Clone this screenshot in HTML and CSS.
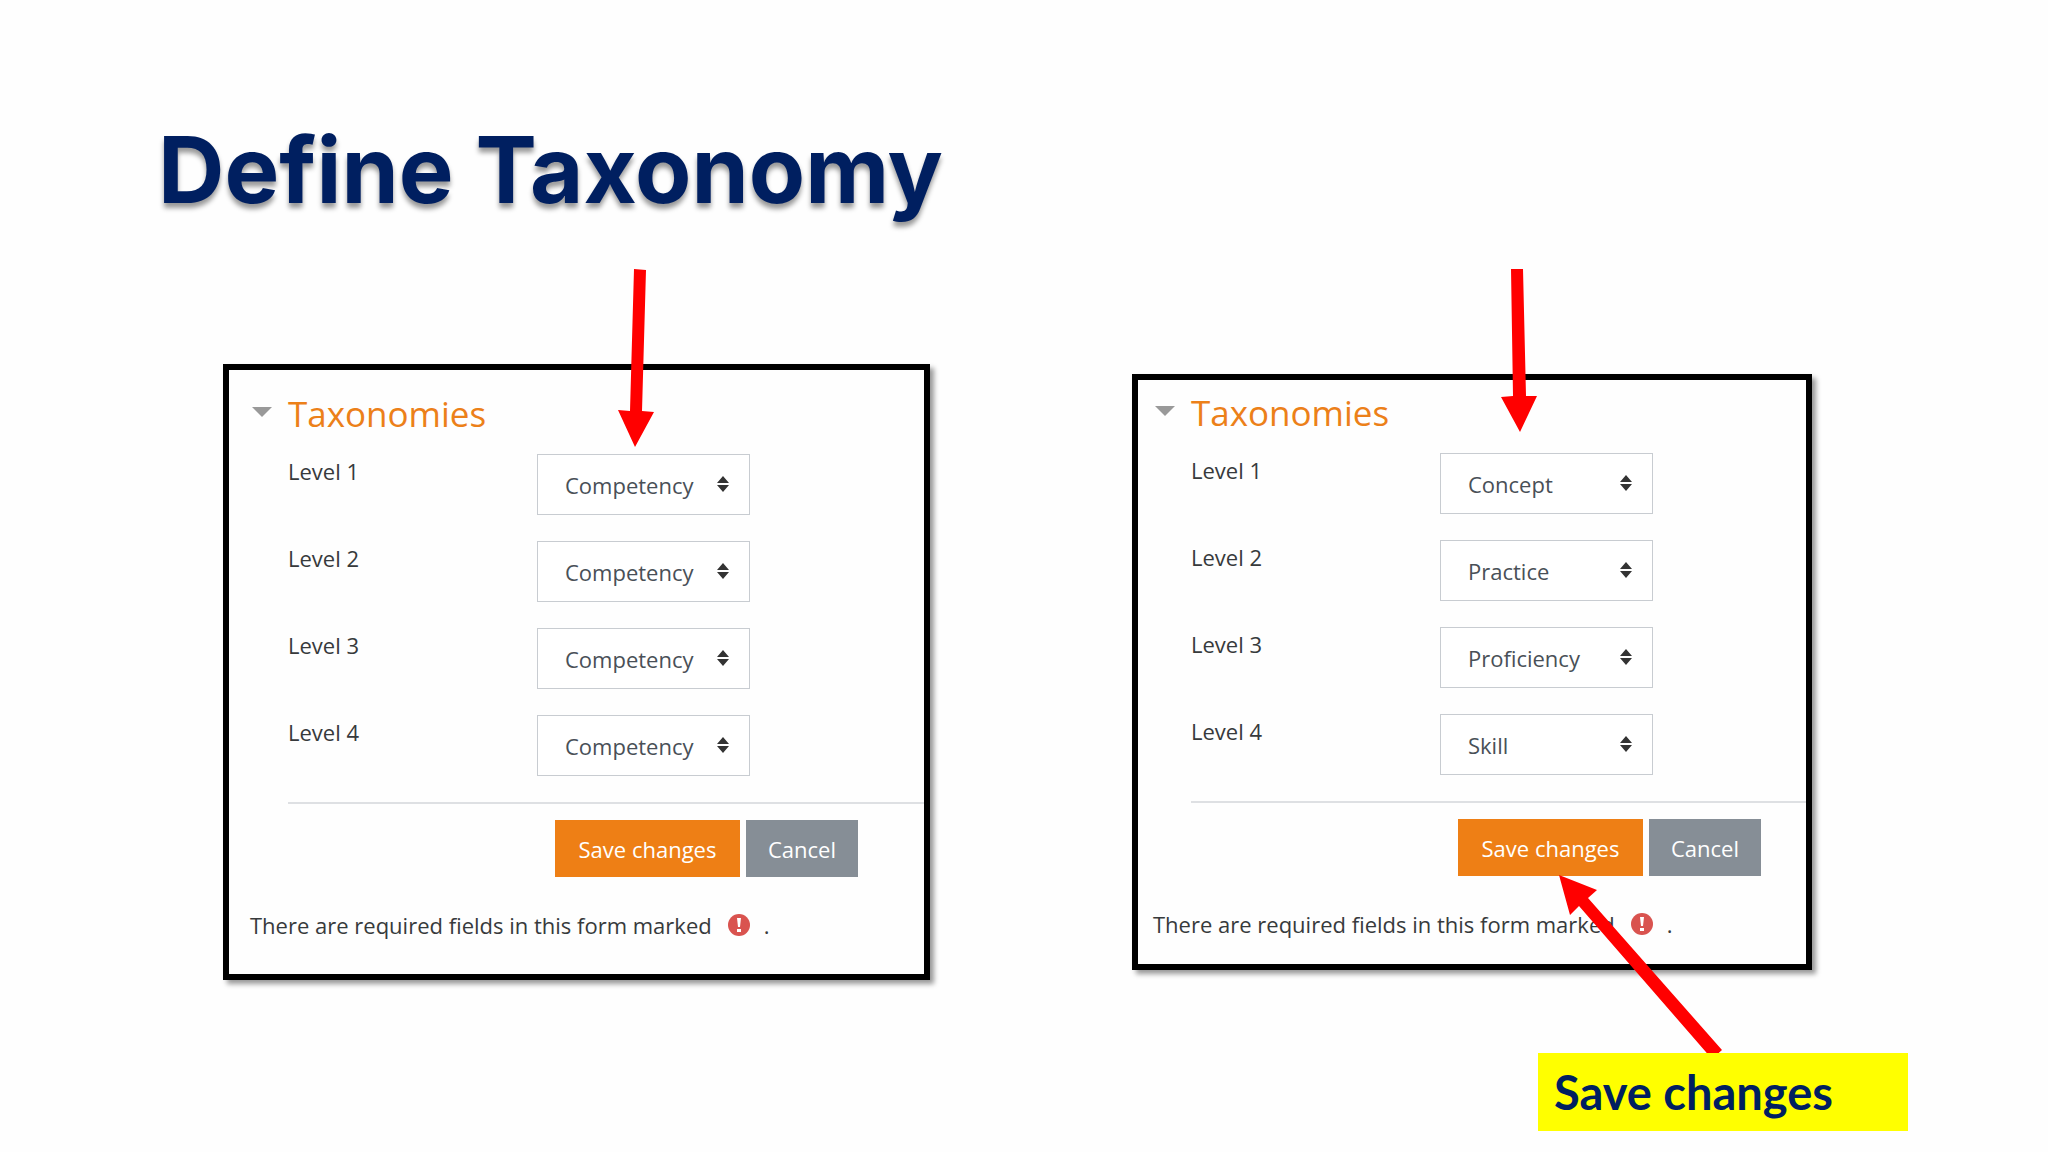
FILE: index.html
```html
<!DOCTYPE html>
<html lang="en">

<head>
    <meta charset="utf-8">
    <title>Define Taxonomy</title>
    <link rel="stylesheet" href="styles.css">
</head>

<body>
    <h1 class="slide-title">Define Taxonomy</h1>
    <div class="panels">
        <form class="panel">
            <h2 class="panel-heading">
                <svg class="caret" width="20" height="10" viewBox="0 0 20 10"><path d="M0 0h20L10 10z" /></svg>
                Taxonomies
            </h2>
            <div class="fields">
                <div class="field">
                    <label for="leftLevel1">Level 1</label>
                    <div class="select-box">
                        <select id="leftLevel1">
                            <option>Competency</option>
                        </select>
                        <svg class="sort" width="12" height="16" viewBox="0 0 12 16"><path d="M0 7l6-7 6 7zM0 9h12l-6 7z" /></svg>
                    </div>
                </div>
                <div class="field">
                    <label for="leftLevel2">Level 2</label>
                    <div class="select-box">
                        <select id="leftLevel2">
                            <option>Competency</option>
                        </select>
                        <svg class="sort" width="12" height="16" viewBox="0 0 12 16"><path d="M0 7l6-7 6 7zM0 9h12l-6 7z" /></svg>
                    </div>
                </div>
                <div class="field">
                    <label for="leftLevel3">Level 3</label>
                    <div class="select-box">
                        <select id="leftLevel3">
                            <option>Competency</option>
                        </select>
                        <svg class="sort" width="12" height="16" viewBox="0 0 12 16"><path d="M0 7l6-7 6 7zM0 9h12l-6 7z" /></svg>
                    </div>
                </div>
                <div class="field">
                    <label for="leftLevel4">Level 4</label>
                    <div class="select-box">
                        <select id="leftLevel4">
                            <option>Competency</option>
                        </select>
                        <svg class="sort" width="12" height="16" viewBox="0 0 12 16"><path d="M0 7l6-7 6 7zM0 9h12l-6 7z" /></svg>
                    </div>
                </div>
            </div>
            <div class="button-container">
                <button type="button" class="save">Save changes</button>
                <button type="button" class="cancel">Cancel</button>
            </div>
            <p class="required-note">
                <span>There are required fields in this form marked</span>
                <svg class="required-icon" width="22" height="22" viewBox="0 0 22 22">
                    <circle cx="11" cy="11" r="11" />
                    <path d="M9 4h4l-1 9h-2zM9 15h4v3h-4z" />
                </svg>
                <span>.</span>
            </p>
            <svg class="arrow arrow-left" width="36" height="178" viewBox="0 0 36 178">
                <path d="M16 0l12 1-4 141 12 1-19 35L0 141l12 1z" />
            </svg>
        </form>

        <form class="panel panel-compact">
            <h2 class="panel-heading">
                <svg class="caret" width="20" height="10" viewBox="0 0 20 10"><path d="M0 0h20L10 10z" /></svg>
                Taxonomies
            </h2>
            <div class="fields">
                <div class="field">
                    <label for="rightLevel1">Level 1</label>
                    <div class="select-box">
                        <select id="rightLevel1">
                            <option>Concept</option>
                        </select>
                        <svg class="sort" width="12" height="16" viewBox="0 0 12 16"><path d="M0 7l6-7 6 7zM0 9h12l-6 7z" /></svg>
                    </div>
                </div>
                <div class="field">
                    <label for="rightLevel2">Level 2</label>
                    <div class="select-box">
                        <select id="rightLevel2">
                            <option>Practice</option>
                        </select>
                        <svg class="sort" width="12" height="16" viewBox="0 0 12 16"><path d="M0 7l6-7 6 7zM0 9h12l-6 7z" /></svg>
                    </div>
                </div>
                <div class="field">
                    <label for="rightLevel3">Level 3</label>
                    <div class="select-box">
                        <select id="rightLevel3">
                            <option>Proficiency</option>
                        </select>
                        <svg class="sort" width="12" height="16" viewBox="0 0 12 16"><path d="M0 7l6-7 6 7zM0 9h12l-6 7z" /></svg>
                    </div>
                </div>
                <div class="field">
                    <label for="rightLevel4">Level 4</label>
                    <div class="select-box">
                        <select id="rightLevel4">
                            <option>Skill</option>
                        </select>
                        <svg class="sort" width="12" height="16" viewBox="0 0 12 16"><path d="M0 7l6-7 6 7zM0 9h12l-6 7z" /></svg>
                    </div>
                </div>
            </div>
            <div class="button-container">
                <button type="button" class="save">Save changes</button>
                <button type="button" class="cancel">Cancel</button>
            </div>
            <p class="required-note">
                <span>There are required fields in this form marked</span>
                <svg class="required-icon" width="22" height="22" viewBox="0 0 22 22">
                    <circle cx="11" cy="11" r="11" />
                    <path d="M9 4h4l-1 9h-2zM9 15h4v3h-4z" />
                </svg>
                <span>.</span>
            </p>
            <svg class="arrow arrow-right" width="36" height="163" viewBox="0 0 36 163">
                <path d="M10 0h12l3 127h11l-17 36L0 128l12-1z" />
            </svg>
            <svg class="arrow arrow-save" width="164" height="184" viewBox="0 0 164 184">
                <path d="M0 0l38 15-9 8 134 152-10 9L20 31l-9 9z" />
            </svg>
        </form>
    </div>
    <div class="callout">Save changes</div>
</body>

</html>
```
FILE: styles.css
```css
body {
    font-family: "Open Sans", "Noto Sans", sans-serif;
    background-color: #fefefe;
    margin: 0;
    padding: 121px 140px 20px 158px;
    display: flex;
    flex-direction: column;
}

.slide-title {
    margin: 0;
    font-family: Inter, sans-serif;
    font-size: 92px;
    line-height: 98px;
    font-weight: bold;
    color: #001f60;
    text-shadow: 0 5px 5px rgba(0, 0, 0, 0.4);
}

.panels {
    display: grid;
    grid-template-columns: 707fr 680fr;
    column-gap: 202px;
    align-items: start;
    margin: 145px 96px 0 65px;
}

.panel {
    position: relative;
    box-sizing: border-box;
    border: 6px solid #000;
    padding: 19px 0 31px 21px;
    background-color: #fefefe;
    box-shadow: 4px 4px 5px rgba(0, 0, 0, 0.4);
}

.panel-compact {
    margin-top: 10px;
    padding: 8px 0 22px 15px;
}

.panel-heading {
    display: flex;
    align-items: center;
    gap: 16px;
    margin: 0 0 15px 2px;
    font-size: 35px;
    line-height: 50px;
    font-weight: normal;
    color: #ec8019;
}

.caret {
    fill: #999;
    margin-bottom: 4px;
}

.fields {
    display: grid;
    gap: 26px;
    margin-left: 38px;
    padding-bottom: 26px;
    border-bottom: 2px solid #dee0e3;
}

.field {
    display: grid;
    grid-template-columns: 249px 213px;
    font-size: 22px;
}

label {
    line-height: 34px;
    color: #373a3c;
}

.select-box {
    position: relative;
}

select {
    display: block;
    width: 100%;
    height: 61px;
    padding: 0 27px;
    border: 1px solid #c8ccd1;
    border-radius: 0;
    background-color: #fff;
    color: #495057;
    font-family: inherit;
    font-size: 22px;
    appearance: none;
}

.sort {
    position: absolute;
    right: 21px;
    top: 22px;
    fill: #333;
    pointer-events: none;
}

.button-container {
    display: flex;
    gap: 6px;
    margin: 16px 0 0 305px;
}

button {
    height: 57px;
    padding: 0;
    border: none;
    color: #fff;
    font-family: inherit;
    font-size: 22px;
    cursor: pointer;
}

.save {
    width: 185px;
    background-color: #ee7f15;
}

.cancel {
    width: 112px;
    background-color: #868e96;
}

.required-note {
    display: flex;
    align-items: center;
    margin: 30px 0 0;
    font-size: 22px;
    line-height: 36px;
    color: #373a3c;
}

.required-icon {
    margin: 0 14px 0 16px;
    fill: #d9534f;
}

.required-icon path {
    fill: #fff;
}

.arrow {
    position: absolute;
    fill: #f00;
}

.arrow-left {
    left: 389px;
    top: -101px;
}

.arrow-right {
    left: 363px;
    top: -111px;
}

.arrow-save {
    left: 421px;
    top: 495px;
}

.callout {
    /* covers the tail of the save arrow */
    position: relative;
    align-self: flex-end;
    box-sizing: border-box;
    width: 370px;
    margin-top: 73px;
    padding: 0 16px;
    background-color: #ff0;
    color: #001f60;
    font-family: Lato, sans-serif;
    font-size: 47px;
    line-height: 78px;
    font-weight: bold;
}
```
